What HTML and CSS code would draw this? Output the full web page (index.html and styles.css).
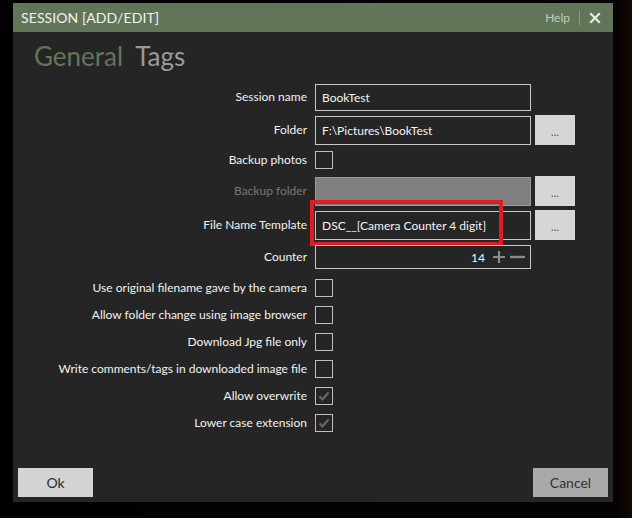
FILE: index.html
```html
<!DOCTYPE html>
<html>
<head>
<meta charset="utf-8">
<link rel="stylesheet" href="styles.css">
</head>
<body>
<div class="screen">
  <div class="dialog">
    <div class="titlebar">
      <span class="title">SESSION [ADD/EDIT]</span>
      <div class="title-actions">
        <span class="help">Help</span>
        <span class="sep"></span>
        <svg class="close" width="12" height="12" viewBox="0 0 12 12"><path d="M2 2 L10 10 M10 2 L2 10" stroke="#e6ebe3" stroke-width="2.2" stroke-linecap="square"/></svg>
      </div>
    </div>
    <div class="tabs">
      <span class="tab active">General</span>
      <span class="tab">Tags</span>
    </div>
    <div class="form">
      <div class="row r-name">
        <label class="lbl">Session name</label>
        <div class="field">BookTest</div>
      </div>
      <div class="row r-folder">
        <label class="lbl">Folder</label>
        <div class="field tall">F:\Pictures\BookTest</div>
        <div class="browse">...</div>
      </div>
      <div class="row r-backup">
        <label class="lbl">Backup photos</label>
        <div class="check"></div>
      </div>
      <div class="row r-bfolder">
        <label class="lbl disabled">Backup folder</label>
        <div class="field tall off"></div>
        <div class="browse">...</div>
      </div>
      <div class="row r-template">
        <label class="lbl">File Name Template</label>
        <div class="field tall">DSC__[Camera Counter 4 digit]</div>
        <div class="browse">...</div>
        <div class="highlight"></div>
      </div>
      <div class="row r-counter">
        <label class="lbl">Counter</label>
        <div class="field counter">
          <span class="num">14</span>
          <svg class="pm" width="36" height="14" viewBox="0 0 36 14"><path d="M2 7 H14 M8 1 V13" stroke="#8a8a8a" stroke-width="2.2"/><path d="M19 7 H34" stroke="#8a8a8a" stroke-width="2.4"/></svg>
        </div>
      </div>
      <div class="checks">
        <div class="crow"><label class="lbl">Use original filename gave by the camera</label><div class="check"></div></div>
        <div class="crow"><label class="lbl">Allow folder change using image browser</label><div class="check"></div></div>
        <div class="crow"><label class="lbl">Download Jpg file only</label><div class="check"></div></div>
        <div class="crow"><label class="lbl">Write comments/tags in downloaded image file</label><div class="check"></div></div>
        <div class="crow"><label class="lbl">Allow overwrite</label><div class="check on"><svg width="16" height="16" viewBox="0 0 16 16"><path d="M3.5 8.5 L6.5 11.5 L12.5 4.5" fill="none" stroke="#5d7056" stroke-width="2.2"/></svg></div></div>
        <div class="crow"><label class="lbl">Lower case extension</label><div class="check on"><svg width="16" height="16" viewBox="0 0 16 16"><path d="M3.5 8.5 L6.5 11.5 L12.5 4.5" fill="none" stroke="#5d7056" stroke-width="2.2"/></svg></div></div>
      </div>
    </div>
    <div class="footer">
      <div class="btn ok">Ok</div>
      <div class="btn cancel">Cancel</div>
    </div>
  </div>
</div>
</body>
</html>
```

FILE: styles.css
```css
html, body {
  margin: 0;
  padding: 0;
  background: #030101;
}
body {
  width: 632px;
  height: 518px;
  overflow: hidden;
  font-family: "Lato", "Noto Sans", sans-serif;
}
.screen {
  padding: 3px 19px 0 13px;
  height: 518px;
  box-sizing: border-box;
  background: linear-gradient(90deg, #020000 0%, #050202 97%, #120805 100%);
}
.dialog {
  width: 600px;
  height: 499px;
  background: #252525;
  display: flex;
  flex-direction: column;
  position: relative;
}
.titlebar {
  height: 29px;
  background: #617658;
  display: flex;
  align-items: center;
  justify-content: space-between;
  padding: 0 12px 0 8px;
}
.title {
  color: #f2f4f0;
  font-size: 14px;
  letter-spacing: 0.1px;
}
.title-actions {
  display: flex;
  align-items: center;
}
.help {
  color: #c3cdbd;
  font-size: 12px;
}
.sep {
  width: 1px;
  height: 14px;
  background: #8b9a84;
  margin: 0 9px 0 9px;
}
.close {
  display: block;
}
.tabs {
  height: 52px;
  padding-left: 21px;
  display: flex;
  align-items: flex-start;
  gap: 12px;
}
.tab {
  font-size: 26px;
  color: #9a9a9a;
  line-height: 1;
  margin-top: 11px;
}
.tab.active {
  color: #617658;
}
.form {
  display: flex;
  flex-direction: column;
}
.row, .crow {
  display: flex;
  align-items: center;
  position: relative;
}
.lbl {
  width: 294px;
  margin-right: 8px;
  text-align: right;
  color: #f2f2f2;
  font-size: 12px;
  flex: none;
  margin-top: -2px;
}
.lbl.disabled {
  color: #777;
}
.field {
  width: 216px;
  height: 27px;
  box-sizing: border-box;
  border: 1px solid #c8c8c8;
  color: #f4f4f4;
  font-size: 12px;
  padding-left: 6px;
  display: flex;
  align-items: center;
  flex: none;
}
.field.tall {
  height: 29px;
}
.field.off {
  background: #7f7f7f;
  border-color: #9a9a9a;
}
.browse {
  width: 40px;
  height: 30px;
  margin-left: 4px;
  background: #d6d6d6;
  color: #555;
  font-size: 11px;
  display: flex;
  align-items: center;
  justify-content: center;
  padding-top: 2px;
  box-sizing: border-box;
}
.r-name { height: 27px; }
.r-folder { height: 30px; margin-top: 4px; }
.r-backup { height: 18px; margin-top: 6px; }
.r-bfolder { height: 30px; margin-top: 7px; }
.r-template { height: 30px; margin-top: 4px; }
.r-counter { height: 24px; margin-top: 5px; }
.highlight {
  position: absolute;
  left: 297px;
  top: -10px;
  width: 193px;
  height: 46px;
  border: 4px solid #e01b24;
  box-sizing: border-box;
  pointer-events: none;
}
.field.counter {
  height: 24px;
  justify-content: flex-end;
  padding-right: 3px;
}
.num {
  margin-right: 6px;
}
.pm {
  display: block;
}
.check {
  width: 18px;
  height: 18px;
  box-sizing: border-box;
  border: 1px solid #bdbdbd;
  flex: none;
  display: flex;
  align-items: center;
  justify-content: center;
}
.check svg {
  display: block;
}
.checks {
  display: flex;
  flex-direction: column;
  gap: 9px;
  margin-top: 10px;
}
.crow {
  height: 18px;
}
.footer {
  margin-top: auto;
  display: flex;
  justify-content: space-between;
  padding: 0 5px 5px 5px;
}
.btn {
  width: 75px;
  height: 29px;
  display: flex;
  align-items: center;
  justify-content: center;
  font-size: 14px;
  color: #2a2a2a;
}
.btn.ok {
  background: #d4d4d4;
}
.btn.cancel {
  background: #a9a9a9;
  color: #333;
}
```
